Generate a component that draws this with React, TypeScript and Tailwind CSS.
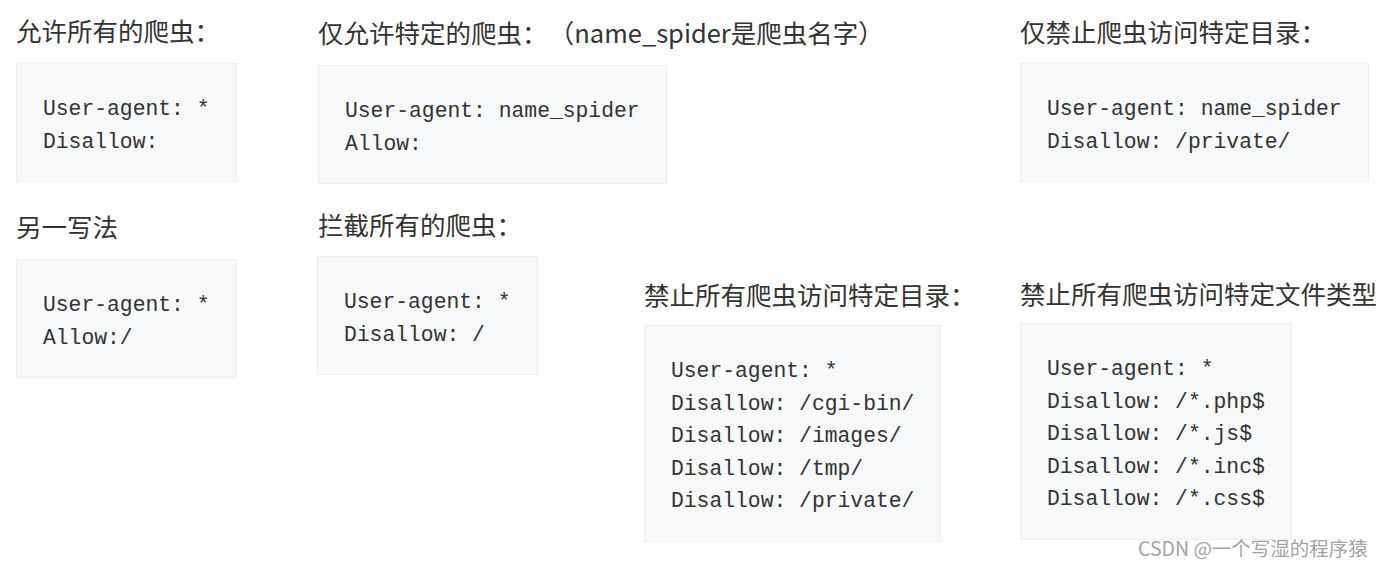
const HEADING =
  "h-[26px] whitespace-nowrap text-[25.5px] leading-[26px] text-[#333] font-['Noto_Sans_CJK_SC',sans-serif]";

function Heading({ children, className = "" }: { children: React.ReactNode; className?: string }) {
  return <h2 className={`${HEADING} ${className}`}>{children}</h2>;
}

function Code({ lines, className = "" }: { lines: string[]; className?: string }) {
  return (
    <pre
      className={`w-fit shrink-0 border border-[#eceef1] bg-[#f6f8fa] px-[26px] pt-[29px] pb-[23px] text-[21.35px] leading-[32.5px] text-[#333] font-['Liberation_Mono',monospace] ${className}`}
    >
      {lines.join("\n")}
    </pre>
  );
}

export default function App() {
  return (
    <div className="relative flex h-[566px] w-[1384px] overflow-hidden bg-white">
      {/* column 1 */}
      <div className="ml-[16px] flex w-[302px] shrink-0 flex-col items-start">
        <Heading className="mt-[17px]">允许所有的爬虫：</Heading>
        <Code lines={["User-agent: *", "Disallow:"]} className="mt-[20px]" />
        <Heading className="mt-[31px]">另一写法</Heading>
        <Code lines={["User-agent: *", "Allow:/"]} className="mt-[20px]" />
      </div>

      {/* column 2 */}
      <div className="flex w-[326px] shrink-0 flex-col items-start">
        <Heading className="mt-[19px]">
          仅允许特定的爬虫：<span className="ml-[14px]">（name_spider是爬虫名字）</span>
        </Heading>
        <Code lines={["User-agent: name_spider", "Allow:"]} className="mt-[20px]" />
        <Heading className="mt-[27px]">拦截所有的爬虫：</Heading>
        <Code lines={["User-agent: *", "Disallow: /"]} className="-ml-px mt-[19px]" />
      </div>

      {/* column 3 */}
      <div className="flex w-[376px] shrink-0 flex-col items-start">
        <Heading className="mt-[281px]">禁止所有爬虫访问特定目录：</Heading>
        <Code
          lines={[
            "User-agent: *",
            "Disallow: /cgi-bin/",
            "Disallow: /images/",
            "Disallow: /tmp/",
            "Disallow: /private/",
          ]}
          className="mt-[18px]"
        />
      </div>

      {/* column 4 */}
      <div className="flex flex-1 flex-col items-start">
        <Heading className="mt-[18px]">仅禁止爬虫访问特定目录：</Heading>
        <Code
          lines={["User-agent: name_spider", "Disallow: /private/"]}
          className="mt-[19px]"
        />
        <Heading className="mt-[98px]">禁止所有爬虫访问特定文件类型</Heading>
        <Code
          lines={[
            "User-agent: *",
            "Disallow: /*.php$",
            "Disallow: /*.js$",
            "Disallow: /*.inc$",
            "Disallow: /*.css$",
          ]}
          className="mt-[17px]"
        />
      </div>

      {/* watermark */}
      <span className="absolute left-[1138px] top-[536px] whitespace-nowrap text-[19.5px] leading-[24px] text-[#a3a3a3] font-['Noto_Sans_CJK_SC',sans-serif]">
        CSDN @一个写湿的程序猿
      </span>
    </div>
  );
}
